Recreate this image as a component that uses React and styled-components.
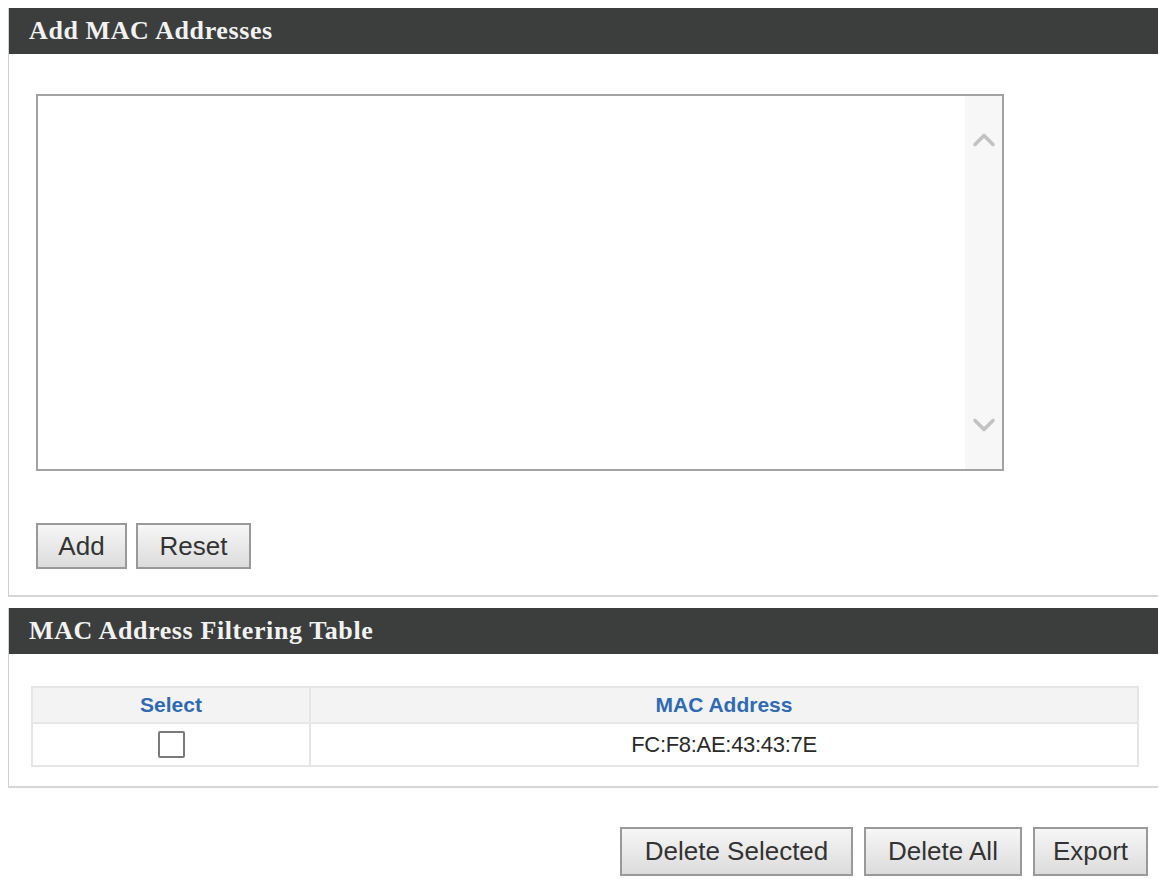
import React from 'react';
import styled, {createGlobalStyle} from 'styled-components';
import {ChevronUp, ChevronDown} from 'lucide-react';

const GlobalStyle = createGlobalStyle`
  body {
    margin: 0;
    background: #ffffff;
    font-family: "Liberation Sans", Arial, sans-serif;
  }
`;

const Page = styled.div`
  width: 1150px;
  padding: 8px 0 0 8px;
`;

const Panel = styled.section`
  border-left: 1px solid #cfcfcf;
  border-bottom: 2px solid #d6d6d6;
  margin-bottom: ${p => p.gapBelow || 0}px;
`;

const PanelHeader = styled.h2`
  margin: 0;
  height: 46px;
  line-height: 46px;
  padding-left: 20px;
  background: #3c3e3d;
  color: #f2f2f2;
  font-family: "Liberation Serif", "Times New Roman", serif;
  font-size: 26px;
  font-weight: bold;
  letter-spacing: 0.6px;
`;

const PanelBody = styled.div`
  padding: ${p => p.pad};
`;

const EditorBox = styled.div`
  display: flex;
  width: 968px;
  height: 377px;
  box-sizing: border-box;
  border: 2px solid #a3a3a3;
  background: #ffffff;
`;

const MacInput = styled.textarea`
  flex: 1;
  border: none;
  outline: none;
  resize: none;
  padding: 6px;
  font-family: "Liberation Sans", Arial, sans-serif;
  font-size: 20px;
`;

const ScrollTrack = styled.div`
  width: 37px;
  background: #f7f7f7;
  display: flex;
  flex-direction: column;
  align-items: center;
  justify-content: space-between;
  padding: 26px 0 26px;
  color: #c2c2c2;
`;

const ButtonRow = styled.div`
  display: flex;
  gap: ${p => p.gap || 9}px;
  justify-content: ${p => (p.right ? 'flex-end' : 'flex-start')};
  margin-top: ${p => p.top || 0}px;
  padding-right: ${p => p.padRight || 0}px;
`;

const Button = styled.button`
  width: ${p => p.w}px;
  height: ${p => p.h || 46}px;
  box-sizing: border-box;
  border: 2px solid #999999;
  background: linear-gradient(#f6f6f6, #dcdcdc);
  color: #333333;
  font-family: "Liberation Sans", Arial, sans-serif;
  font-size: 26px;
  padding: 0;
  cursor: pointer;
`;

const Table = styled.table`
  width: 100%;
  border-collapse: collapse;
  border: 2px solid #e6e6e6;
`;

const HeadCell = styled.th`
  height: 34px;
  padding: 0;
  background: #f3f3f3;
  border: 2px solid #e6e6e6;
  color: #2f6ab2;
  font-family: "Liberation Sans", Arial, sans-serif;
  font-size: 21px;
  font-weight: bold;
  text-align: center;
  width: ${p => p.w || 'auto'};
`;

const Cell = styled.td`
  height: 41px;
  padding: 0;
  border: 2px solid #e6e6e6;
  color: #2a2a2a;
  font-size: 22px;
  letter-spacing: -0.3px;
  text-align: center;
  vertical-align: middle;
`;

const Check = styled.span`
  display: inline-block;
  width: 27px;
  height: 27px;
  box-sizing: border-box;
  border: 2px solid #7a7a7a;
  border-radius: 2px;
  background: #ffffff;
  vertical-align: middle;
`;

const entries = ['FC:F8:AE:43:43:7E'];

export default function App() {
  return (
    <Page>
      <GlobalStyle />
      <Panel gapBelow={11}>
        <PanelHeader>Add MAC Addresses</PanelHeader>
        <PanelBody pad="40px 0 26px 27px">
          <EditorBox>
            <MacInput spellCheck={false} />
            <ScrollTrack>
              <ChevronUp size={36} strokeWidth={2.4} />
              <ChevronDown size={36} strokeWidth={2.4} />
            </ScrollTrack>
          </EditorBox>
          <ButtonRow top={52}>
            <Button w={91}>Add</Button>
            <Button w={115}>Reset</Button>
          </ButtonRow>
        </PanelBody>
      </Panel>

      <Panel>
        <PanelHeader>MAC Address Filtering Table</PanelHeader>
        <PanelBody pad="32px 19px 19px 22px">
          <Table>
            <thead>
              <tr>
                <HeadCell w="276px">Select</HeadCell>
                <HeadCell>MAC Address</HeadCell>
              </tr>
            </thead>
            <tbody>
              {entries.map(mac => (
                <tr key={mac}>
                  <Cell>
                    <Check />
                  </Cell>
                  <Cell>{mac}</Cell>
                </tr>
              ))}
            </tbody>
          </Table>
        </PanelBody>
      </Panel>

      <ButtonRow right top={39} gap={11} padRight={10}>
        <Button w={233} h={49}>Delete Selected</Button>
        <Button w={158} h={49}>Delete All</Button>
        <Button w={115} h={49}>Export</Button>
      </ButtonRow>
    </Page>
  );
}
